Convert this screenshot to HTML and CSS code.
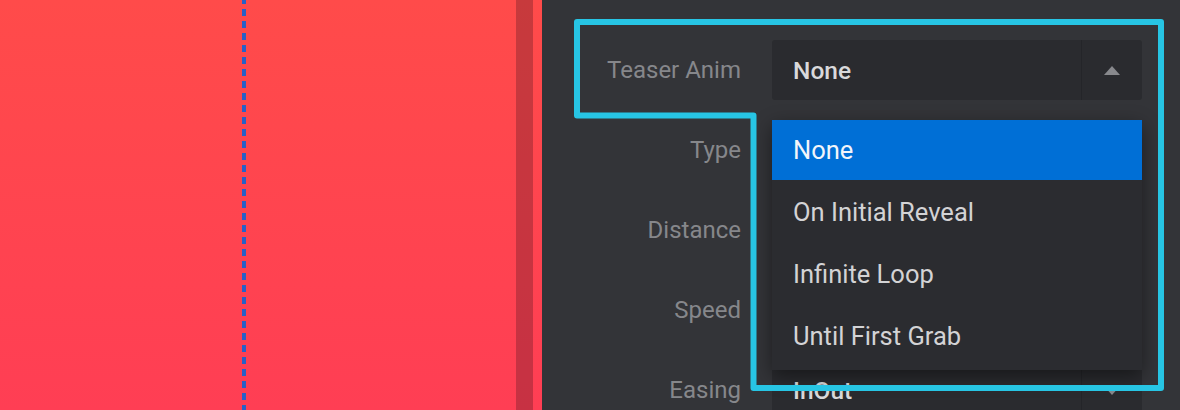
FILE: index.html
```html
<!DOCTYPE html>
<html lang="en">
<head>
  <meta charset="UTF-8">
  <meta name="viewport" content="width=device-width, initial-scale=1.0">
  <title>Teaser Anim</title>
  <link rel="stylesheet" href="styles.css">
</head>
<body>
  <div class="app">
    <div class="stage">
      <div class="guide"></div>
      <div class="scroll"></div>
    </div>
    <div class="panel">
      <div class="row">
        <div class="label">Teaser Anim</div>
        <div class="field">
          <div class="select">
            <span class="value">None</span>
            <span class="arrow up"></span>
          </div>
          <ul class="menu">
            <li class="item active">None</li>
            <li class="item">On Initial Reveal</li>
            <li class="item">Infinite Loop</li>
            <li class="item">Until First Grab</li>
          </ul>
        </div>
      </div>
      <div class="row">
        <div class="label">Type</div>
        <div class="field">
          <div class="select"><span class="value"></span><span class="arrow"></span></div>
        </div>
      </div>
      <div class="row">
        <div class="label">Distance</div>
        <div class="field">
          <div class="select"><span class="value"></span><span class="arrow"></span></div>
        </div>
      </div>
      <div class="row">
        <div class="label">Speed</div>
        <div class="field">
          <div class="select"><span class="value"></span><span class="arrow"></span></div>
        </div>
      </div>
      <div class="row">
        <div class="label">Easing</div>
        <div class="field">
          <div class="select"><span class="value">InOut</span><span class="arrow"></span></div>
        </div>
      </div>
    </div>
  </div>

  <!-- highlight outline drawn over the panel -->
  <svg class="outline" width="1180" height="410" viewBox="0 0 1180 410">
    <path d="M577 22 H1161 V388 H753.5 V115.5 H577 Z" fill="none" stroke="#27c5e4" stroke-width="6" stroke-linejoin="round"/>
  </svg>
</body>
</html>
```

FILE: styles.css
```css
html, body {
  margin: 0;
  height: 100%;
  overflow: hidden;
}

body {
  font-family: Roboto, "Noto Sans", sans-serif;
  background-color: #333438;
  position: relative;
}

.app {
  display: flex;
  height: 410px;
}

.stage {
  width: 542px;
  flex-shrink: 0;
  display: flex;
  background: linear-gradient(to bottom, #ff4b4a, #ff3e54);
}

.guide {
  width: 4px;
  margin-left: 242px;
  background: repeating-linear-gradient(to bottom, #2a60c6 0 4px, transparent 4px 9px, #2a60c6 9px 12px);
}

.scroll {
  width: 17px;
  margin-left: auto;
  margin-right: 9px;
  background-color: rgba(70, 20, 30, 0.3);
}

.panel {
  flex: 1;
  display: flex;
  flex-direction: column;
  gap: 20px;
  padding-top: 40px;
  background-color: #333438;
}

.row {
  display: flex;
  align-items: center;
  gap: 31px;
}

.label {
  width: 199px;
  flex-shrink: 0;
  text-align: right;
  font-size: 24px;
  color: #86878b;
}

.field {
  position: relative;
  width: 370px;
}

.select {
  height: 60px;
  display: flex;
  align-items: center;
  background-color: #2a2b2f;
  border-radius: 3px;
}

.value {
  flex: 1;
  padding-left: 21px;
  font-size: 24.5px;
  font-weight: 500;
  color: #d9d9db;
}

.arrow {
  width: 60px;
  height: 60px;
  border-left: 1px solid #242529;
  display: flex;
  align-items: center;
  justify-content: center;
}

.arrow::after {
  content: "";
  width: 0;
  height: 0;
  border-left: 8px solid transparent;
  border-right: 8px solid transparent;
  border-top: 9px solid #88898d;
}

.arrow.up::after {
  border-top: none;
  border-bottom: 9px solid #88898d;
}

.menu {
  position: absolute;
  top: calc(100% + 20px);
  left: 0;
  right: 0;
  z-index: 2;
  margin: 0;
  padding: 0 0 2px;
  list-style: none;
  background-color: #2b2c30;
  box-shadow: 0 6px 18px rgba(0, 0, 0, 0.45);
}

.item {
  height: 60px;
  margin-bottom: 2px;
  padding-left: 21px;
  display: flex;
  align-items: center;
  font-size: 25.5px;
  color: #d3d3d5;
}

.item.active {
  background-color: #006fd6;
  color: #f2f5fa;
}

.outline {
  position: absolute;
  top: 0;
  left: 0;
  z-index: 5;
  pointer-events: none;
}
```
